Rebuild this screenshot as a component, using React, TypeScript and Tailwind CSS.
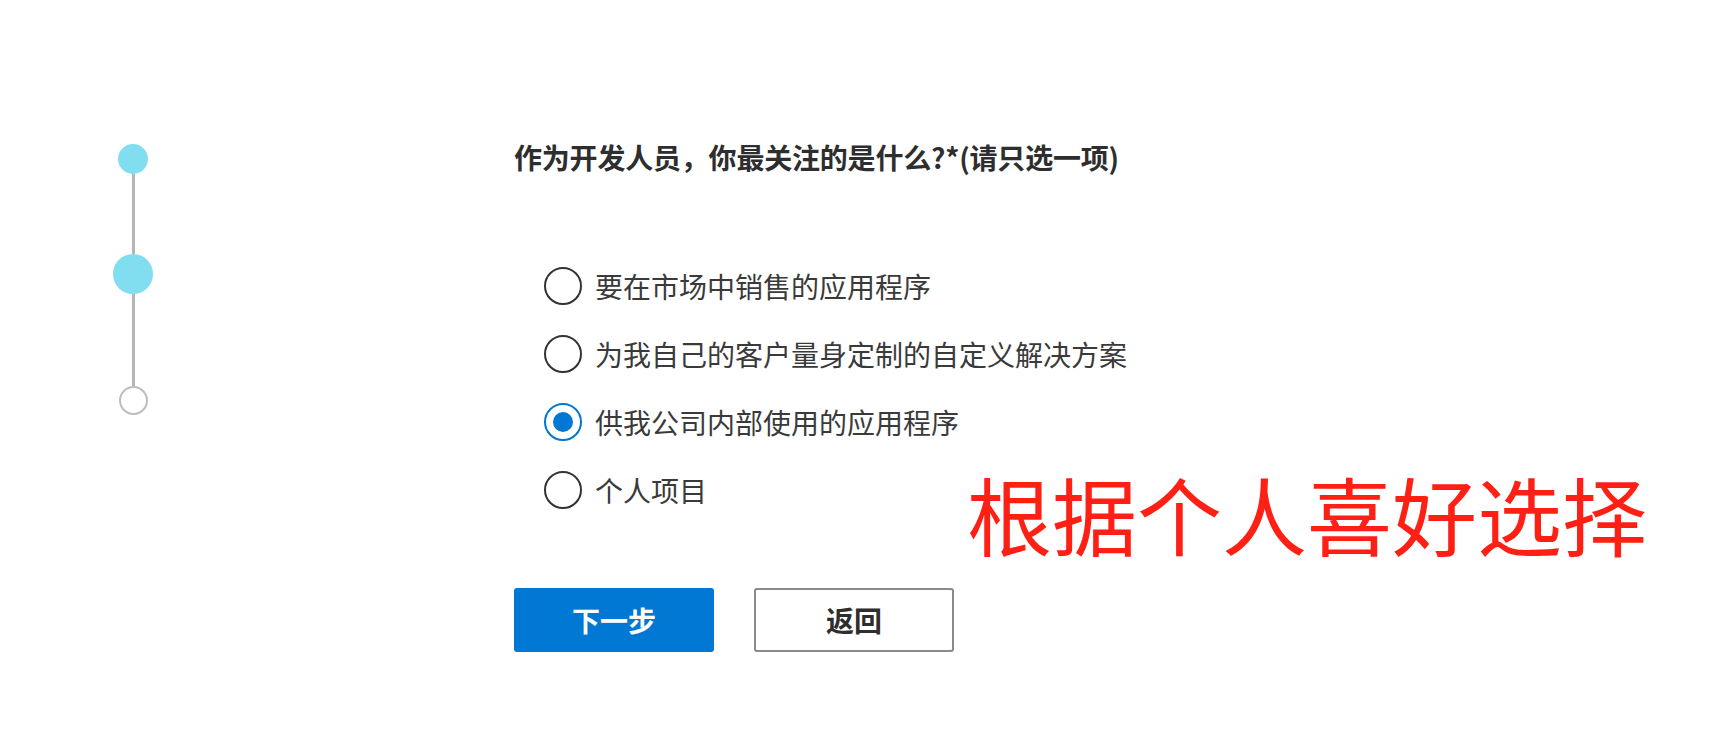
import type React from "react";

const options = [
	"要在市场中销售的应用程序",
	"为我自己的客户量身定制的自定义解决方案",
	"供我公司内部使用的应用程序",
	"个人项目",
];

interface RadioRowProps {
	label: string;
	checked?: boolean;
}

function RadioRow({ label, checked }: RadioRowProps) {
	return (
		<div className="flex h-[68px] items-center">
			{checked ? (
				<span className="flex h-[38px] w-[38px] items-center justify-center rounded-full border-2 border-[#0078d4]">
					<span className="h-5 w-5 rounded-full bg-[#0078d4]" />
				</span>
			) : (
				<span className="h-[38px] w-[38px] rounded-full border-2 border-[#333333]" />
			)}
			<span className="ml-[13px] text-[28px] leading-9 text-[#3a3a3a]">
				{label}
			</span>
		</div>
	);
}

const App: React.FC = () => {
	return (
		<div className="relative min-h-[742px] w-full bg-white font-['Noto_Sans_CJK_SC','Noto_Sans',sans-serif]">
			<div className="flex items-start pl-[113px] pt-[144px]">
				{/* stepper */}
				<div className="flex w-10 flex-col items-center">
					<div className="h-[30px] w-[30px] rounded-full bg-[#80def0]" />
					<div className="h-[80px] w-[3px] bg-[#b5b5b5]" />
					<div className="h-10 w-10 rounded-full bg-[#80def0]" />
					<div className="h-[92px] w-[3px] bg-[#b5b5b5]" />
					<div className="h-[29px] w-[29px] rounded-full border-2 border-[#bdbdbd]" />
				</div>

				{/* question */}
				<div className="-mt-[2px] ml-[361px] flex flex-col">
					<h1 className="text-[28px] font-bold leading-[30px] tracking-[-0.2px] text-[#2e2e2e]">
						作为开发人员，你最关注的是什么?*(请只选一项)
					</h1>
					<div className="ml-[30px] mt-[80px] flex flex-col">
						{options.map((o, i) => (
							<RadioRow key={o} label={o} checked={i === 2} />
						))}
					</div>
					<div className="mt-[64px] flex gap-[40px]">
						<button
							type="button"
							className="h-[64px] w-[200px] rounded-[3px] bg-[#0078d4] text-[28px] font-bold text-white"
						>
							下一步
						</button>
						<button
							type="button"
							className="h-[64px] w-[200px] rounded-[3px] border-2 border-[#8a8a8a] bg-white text-[28px] font-bold text-[#2e2e2e]"
						>
							返回
						</button>
					</div>
				</div>
			</div>

			{/* annotation */}
			<div className="absolute left-[967px] top-[470px] whitespace-nowrap text-[85px] leading-none text-[#ff2015]">
				根据个人喜好选择
			</div>
		</div>
	);
};

export default App;
